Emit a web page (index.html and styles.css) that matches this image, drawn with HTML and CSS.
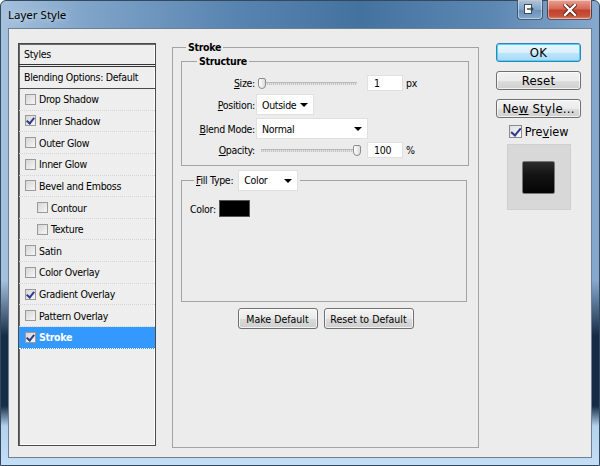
FILE: index.html
```html
<!DOCTYPE html>
<html lang="en">
<head>
    <meta charset="UTF-8">
    <title>Layer Style</title>
    <link rel="stylesheet" href="styles.css">
</head>
<body>
    <div class="window">
        <div class="titlebar">
            <span class="title">Layer Style</span>
            <div class="caption-buttons">
                <span class="cap-btn dock">
                    <svg width="12" height="11" viewBox="0 0 12 11">
                        <rect x="0.5" y="0.5" width="7" height="9" fill="#fff" stroke="#3d4a57"/>
                        <path d="M3 5h6M7 3l2 2-2 2" fill="none" stroke="#3d4a57" stroke-width="1.3"/>
                    </svg>
                </span>
                <span class="cap-btn close">
                    <svg width="14" height="12" viewBox="0 0 14 12">
                        <path d="M2 1l10 10M12 1L2 11" stroke="#5a1f18" stroke-width="4.2" stroke-linecap="square"/>
                        <path d="M2 1l10 10M12 1L2 11" stroke="#fff" stroke-width="2.4" stroke-linecap="square"/>
                    </svg>
                </span>
            </div>
        </div>

        <div class="client">
            <div class="styles-list">
                <div class="list-head">Styles</div>
                <div class="list-blend">Blending Options: Default</div>
                <ul class="effects">
                    <li><span class="check"></span>Drop Shadow</li>
                    <li><span class="check on"></span>Inner Shadow</li>
                    <li><span class="check"></span>Outer Glow</li>
                    <li><span class="check"></span>Inner Glow</li>
                    <li><span class="check"></span>Bevel and Emboss</li>
                    <li class="sub"><span class="check"></span>Contour</li>
                    <li class="sub"><span class="check"></span>Texture</li>
                    <li><span class="check"></span>Satin</li>
                    <li><span class="check"></span>Color Overlay</li>
                    <li><span class="check on"></span>Gradient Overlay</li>
                    <li><span class="check"></span>Pattern Overlay</li>
                    <li class="active"><span class="check on"></span>Stroke</li>
                </ul>
            </div>

            <fieldset class="group stroke">
                <legend>Stroke</legend>

                <fieldset class="group structure">
                    <legend>Structure</legend>
                    <div class="rows">
                        <label><u>S</u>ize:</label>
                        <div class="control">
                            <div class="slider"><span class="track"></span><span class="thumb at-start"></span></div>
                            <span class="field">1</span>
                            <span class="unit">px</span>
                        </div>

                        <label><u>P</u>osition:</label>
                        <div class="control">
                            <span class="select pos">Outside<i class="arrow"></i></span>
                        </div>

                        <label><u>B</u>lend Mode:</label>
                        <div class="control">
                            <span class="select blend">Normal<i class="arrow"></i></span>
                        </div>

                        <label><u>O</u>pacity:</label>
                        <div class="control">
                            <div class="slider"><span class="track"></span><span class="thumb at-end"></span></div>
                            <span class="field">100</span>
                            <span class="unit">%</span>
                        </div>
                    </div>
                </fieldset>

                <fieldset class="group fill">
                    <legend><span><u>F</u>ill Type:</span><span class="select kind">Color<i class="arrow"></i></span></legend>
                    <div class="color-row">Color: <span class="swatch"></span></div>
                </fieldset>

                <div class="actions">
                    <button class="btn make">Make Default</button>
                    <button class="btn reset-def">Reset to Default</button>
                </div>
            </fieldset>

            <div class="side">
                <button class="side-btn default">OK</button>
                <button class="side-btn">Reset</button>
                <button class="side-btn">Ne<u>w</u> Style...</button>
                <div class="preview-toggle"><span class="check on"></span>Pre<u>v</u>iew</div>
                <div class="preview-box"><span class="preview-swatch"></span></div>
            </div>
        </div>
    </div>
</body>
</html>
```

FILE: styles.css
```css
* {
    box-sizing: border-box;
}

body {
    margin: 0;
    width: 600px;
    height: 466px;
    overflow: hidden;
    font-family: "DejaVu Sans Condensed", "DejaVu Sans", sans-serif;
    font-size: 10.5px;
    letter-spacing: -0.3px;
    color: #000;
}

u {
    text-decoration: underline;
    text-underline-offset: 1px;
}

.window {
    width: 600px;
    height: 466px;
    display: flex;
    flex-direction: column;
    border: 1px solid #34495f;
    border-radius: 6px 6px 0 0;
    background:
        linear-gradient(180deg, rgba(0,0,0,0) 0, rgba(0,0,0,0) 280px, rgba(12,32,58,0.92) 335px, rgba(12,32,58,0.92) 405px, #b3d1ee 425px, #c4def5 100%),
        linear-gradient(90deg, #a4c1dd 0%, #7ea3c8 15%, #5783b0 40%, #44729f 60%, #5c87b3 82%, #86a9cd 100%);
}

/* title bar */
.titlebar {
    height: 27px;
    display: flex;
    justify-content: space-between;
    align-items: flex-start;
    padding: 0 7px;
}

.title {
    font-family: "Noto Sans", "Open Sans", sans-serif;
    font-size: 11.5px;
    letter-spacing: 0;
    line-height: 14px;
    margin-top: 7px;
    color: #000;
    text-shadow: 0 0 6px rgba(255,255,255,0.8);
}

.caption-buttons {
    display: flex;
    gap: 4px;
    margin-top: -1px;
}

.cap-btn {
    height: 20px;
    display: flex;
    align-items: center;
    justify-content: center;
    border: 1px solid rgba(40,60,85,0.75);
    border-top: none;
    border-radius: 0 0 4px 4px;
    box-shadow: inset 0 0 0 1px rgba(255,255,255,0.45);
}

.cap-btn.dock {
    width: 26px;
    background: linear-gradient(180deg, rgba(255,255,255,0.45), rgba(255,255,255,0.15) 50%, rgba(90,130,170,0.3) 51%, rgba(170,200,230,0.4));
}

.cap-btn.close {
    width: 45px;
    background: linear-gradient(180deg, #e8a294 0%, #d76a57 45%, #c2412d 55%, #c8523c 85%, #e08a6d 100%);
}

/* client area */
.client {
    flex: 1;
    margin: 0 7px 7px;
    background: #ececec;
    border: 1px solid #6e8194;
    display: flex;
    align-items: stretch;
}

/* styles list */
.styles-list {
    width: 138px;
    margin: 14px 0 11px 9px;
    background: #eeeeee;
    border: 1px solid #4a4a4a;
    box-shadow: inset 1px 1px 0 #6a6a6a, inset -1px -1px 0 #fff;
}

.list-head {
    height: 23px;
    line-height: 21px;
    padding-left: 5px;
    border-bottom: 3px double #333;
}

.list-blend {
    height: 22px;
    line-height: 21px;
    padding-left: 5px;
    border-bottom: 1px solid #4a4a4a;
}

.effects {
    list-style: none;
    margin: 0;
    padding: 0;
}

.effects li {
    height: 21.65px;
    display: flex;
    align-items: center;
    padding-left: 6px;
    border-bottom: 1px dotted #d4d4d4;
}

.effects li.sub {
    padding-left: 18px;
}

.effects li.active {
    background: #3399ff;
    color: #fff;
    font-weight: bold;
    border-bottom-color: #fff;
}

.check {
    width: 11px;
    height: 11px;
    margin-right: 3px;
    flex: none;
    border: 1px solid #9a9a9a;
    background: linear-gradient(135deg, #d6d6d6, #f6f6f6);
    position: relative;
}

.check.on::after {
    content: "";
    position: absolute;
    left: 2px;
    top: 0;
    width: 3px;
    height: 6px;
    border: solid #2c3b8f;
    border-width: 0 2px 2px 0;
    transform: rotate(40deg);
}

/* group boxes */
.group {
    margin: 0;
    min-width: 0;
    border: 1px solid #a3a3a3;
}

.group > legend {
    padding: 0 2px;
    line-height: 13px;
}

.stroke {
    width: 307px;
    margin: 12px 0 9px 16px;
    padding: 1px 8px 0 8px;
}

.stroke > legend,
.structure > legend {
    font-weight: bold;
}

.stroke > legend {
    margin-left: 5px;
}

.structure {
    width: 288px;
    padding: 0;
}

.structure > legend {
    margin-left: 15px;
}

.rows {
    display: grid;
    grid-template-columns: 73px auto;
    column-gap: 1px;
    row-gap: 3px;
    padding: 7px 0 7px;
    align-items: center;
}

.rows label {
    text-align: right;
}

.control {
    display: flex;
    align-items: center;
}

.slider {
    width: 106px;
    height: 16px;
    position: relative;
}

.track {
    position: absolute;
    left: 5px;
    right: 5px;
    top: 7px;
    height: 3px;
    background: repeating-linear-gradient(90deg, #c6c6c6 0, #c6c6c6 1px, #e2e2e2 1px, #e2e2e2 2px);
    border-top: 1px solid #b8b8b8;
}

.thumb {
    position: absolute;
    top: 3px;
    width: 8px;
    height: 11px;
    border: 1px solid #8a8a8a;
    border-radius: 2px 2px 4px 4px;
    background: linear-gradient(90deg, #fff, #dcdcdc);
}

.thumb.at-start {
    left: 2px;
}

.thumb.at-end {
    right: 1px;
}

.field {
    width: 36px;
    height: 16px;
    margin-left: 5px;
    padding-left: 6px;
    line-height: 15px;
    background: #fff;
    border: 1px solid #e0e0e0;
}

.unit {
    margin-left: 3px;
}

.select {
    height: 21px;
    display: inline-flex;
    align-items: center;
    justify-content: space-between;
    padding: 0 5px 0 5px;
    background: #fff;
    border: 1px solid #e0e0e0;
}

.select.pos {
    width: 58px;
}

.select.blend {
    width: 112px;
}

.select.kind {
    width: 60px;
    margin-left: 5px;
}

.arrow {
    width: 0;
    height: 0;
    border-left: 4px solid transparent;
    border-right: 4px solid transparent;
    border-top: 4px solid #000;
}

.fill {
    width: 286px;
    height: 132px;
    margin-top: 4px;
    padding: 0;
}

.fill > legend {
    margin-left: 12px;
    display: flex;
    align-items: center;
}

.color-row {
    display: flex;
    align-items: center;
    padding: 9px 0 0 8px;
}

.swatch {
    width: 31px;
    height: 17px;
    margin-left: 3px;
    background: #000;
    border: 1px solid #555;
}

.actions {
    display: flex;
    justify-content: center;
    gap: 6px;
    margin-top: 6px;
}

.btn {
    height: 21px;
    padding: 0;
    font: inherit;
    color: #000;
    border: 1px solid #707070;
    border-radius: 3px;
    background: linear-gradient(180deg, #f4f4f4 0%, #e9e9e9 50%, #dadada 51%, #cfcfcf 100%);
    box-shadow: inset 0 0 0 1px rgba(255,255,255,0.7);
}

.btn.make {
    width: 80px;
}

.btn.reset-def {
    width: 90px;
}

/* right column */
.side {
    width: 85px;
    margin: 14px 0 0 17px;
    display: flex;
    flex-direction: column;
    align-items: center;
}

.side-btn {
    width: 85px;
    height: 19px;
    margin-bottom: 9px;
    padding: 0;
    font-family: "DejaVu Sans Condensed", "DejaVu Sans", sans-serif;
    font-size: 13px;
    letter-spacing: 0.2px;
    color: #000;
    border: 1px solid #707070;
    border-radius: 3px;
    background: linear-gradient(180deg, #f2f2f2 0%, #ebebeb 50%, #dddddd 51%, #cfcfcf 100%);
    box-shadow: inset 0 0 0 1px rgba(255,255,255,0.7);
}

.side-btn.default {
    border-color: #3c7fb1;
    background: linear-gradient(180deg, #eaf6fd 0%, #d9f0fc 50%, #bee6fd 51%, #a7d9f5 100%);
    box-shadow: inset 0 0 0 1px #48d5fd;
}

.preview-toggle {
    display: flex;
    align-items: center;
    height: 13px;
    margin-top: -2px;
    font-size: 12.5px;
    letter-spacing: 0;
}

.preview-toggle .check {
    width: 13px;
    height: 13px;
    border-color: #8a8a8a;
    background: linear-gradient(135deg, #dedede, #fafafa);
}

.preview-toggle .check.on::after {
    left: 3px;
    top: 0;
    width: 4px;
    height: 8px;
}

.preview-box {
    width: 64px;
    height: 66px;
    margin-top: 6px;
    padding: 16px 0 0 14px;
    background: #d8d8d8;
    border: 1px solid #cfcfcf;
}

.preview-swatch {
    display: block;
    width: 33px;
    height: 33px;
    border: 1px solid #777;
    border-radius: 2px;
    background: linear-gradient(180deg, #2c2c2c 0%, #141414 40%, #050505 100%);
}
```
